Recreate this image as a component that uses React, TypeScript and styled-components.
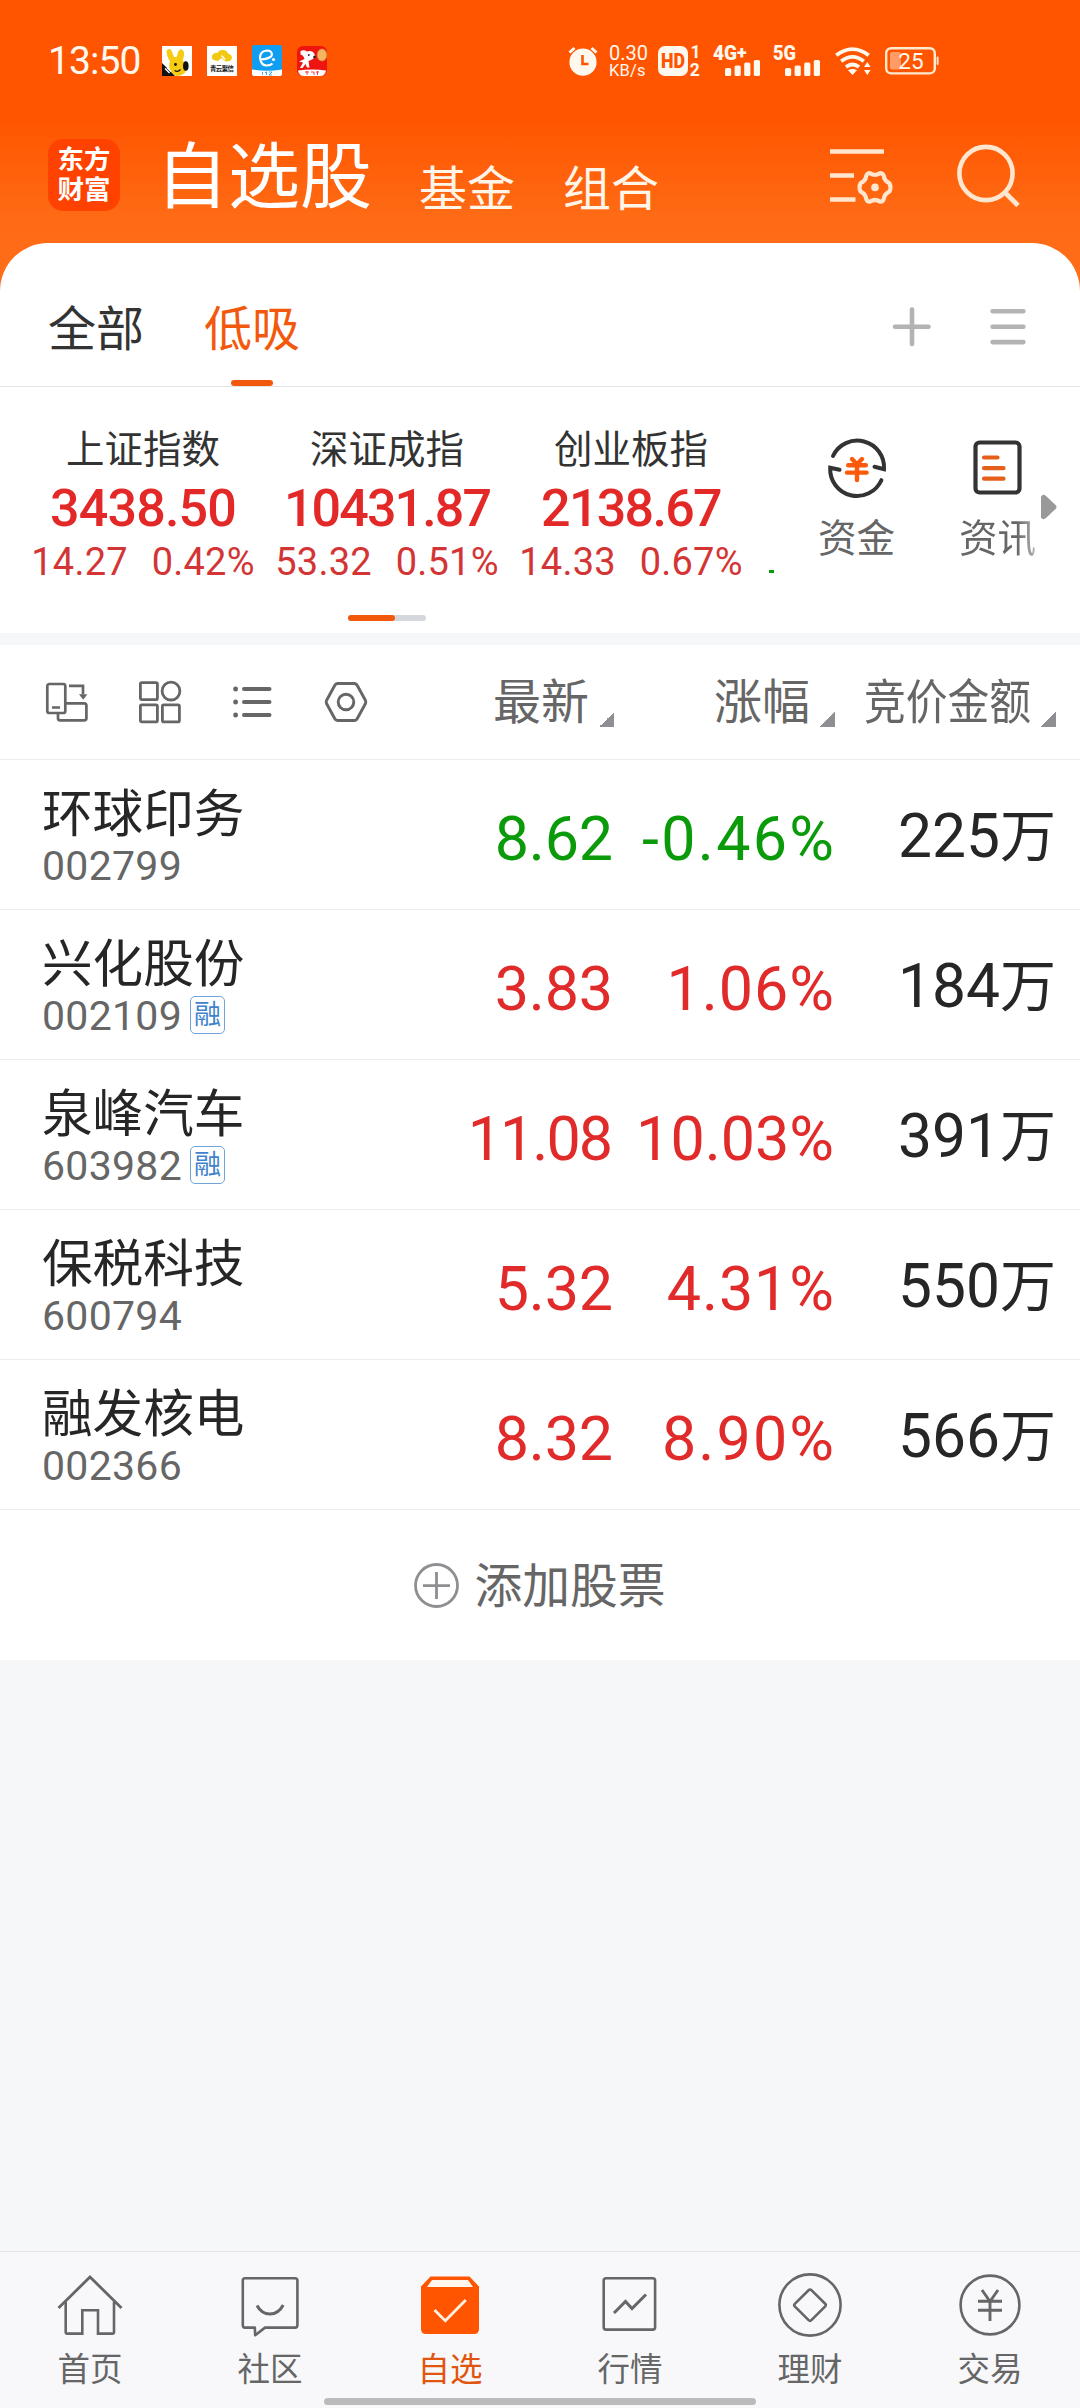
import React from 'react';
import styled, { createGlobalStyle, css } from 'styled-components';

const BRAND = '#ff5500';
const RED = '#e12a2a';
const GREEN = '#0a9a0a';
const GREY = '#666666';

const GlobalStyle = createGlobalStyle`
  *, *::before, *::after { box-sizing: border-box; }
  body {
    margin: 0;
    background: #f6f7f9;
    font-family: Roboto, "Noto Sans CJK SC", sans-serif;
  }
  svg { display: block; flex: none; overflow: visible; }
  button {
    font: inherit; color: inherit; background: none; border: 0; padding: 0; margin: 0;
  }
`;

const Screen = styled.div`
  width: 1080px;
  height: 2408px;
  display: flex;
  flex-direction: column;
  overflow: hidden;
  background: #f6f7f9;
`;

/* ---------- header ---------- */

const Header = styled.header`
  height: 300px;
  flex: none;
  color: #fff8ee;
  background: linear-gradient(180deg, ${BRAND} 0, ${BRAND} 118px, #ff6a14 215px, #ff6e1a 300px);
`;

const StatusBar = styled.div`
  height: 122px;
  padding: 0 141px 0 48px;
  display: flex;
  justify-content: space-between;
`;

const StatusGroup = styled.div<{ $gap: number }>`
  height: 122px;
  display: flex;
  align-items: center;
  gap: ${(p) => p.$gap}px;
`;

const Clock = styled.span`
  width: 99px;
  font-size: 39px;
  line-height: 124px;
  letter-spacing: -0.9px;
  white-space: nowrap;
`;

const Speed = styled.div`
  width: 38px;
  margin: 0 -2px 0 -2px;
  display: flex;
  flex-direction: column;
  font-size: 20px;
  line-height: 18px;
  white-space: nowrap;
  span + span { font-size: 16.5px; line-height: 17px; letter-spacing: 0.2px; }
`;

const WifiSlot = styled.div`
  margin: 0 1px 0 2px;
`;

const TitleBar = styled.div`
  height: 108px;
  display: flex;
  align-items: center;
  padding: 0 60px 0 48px;
`;

const Logo = styled.div`
  width: 72px;
  height: 72px;
  border-radius: 15px;
  background: #ff4200;
  color: #fff;
  display: flex;
  flex-direction: column;
  align-items: center;
  justify-content: center;
  font-weight: 700;
  font-size: 26.5px;
  line-height: 30px;
  margin-top: -2px;
`;

const Title = styled.h1`
  margin: 4px 0 0 36px;
  font-size: 72px;
  font-weight: 400;
  line-height: 80px;
  color: #fff;
`;

const HeaderLink = styled.a<{ $left: number }>`
  margin: 27px 0 0 ${(p) => p.$left}px;
  font-size: 48px;
  line-height: 56px;
  color: #fff5e8;
`;

const HeaderActions = styled.div`
  margin: -2px 0 0 auto;
  display: flex;
  align-items: center;
  gap: 64px;
`;

/* ---------- sheet ---------- */

const Sheet = styled.main`
  margin-top: -57px;
  flex: none;
  background: #fff;
  border-radius: 48px 48px 0 0;
`;

const TabRow = styled.div`
  height: 144px;
  display: flex;
  padding: 0 54px 0 48px;
  border-bottom: 1px solid #e4e4e4;
`;

const Tab = styled.button<{ $active?: boolean }>`
  height: 143px;
  margin-right: 60px;
  padding-top: 55px;
  display: flex;
  flex-direction: column;
  align-items: center;
  justify-content: space-between;
  font-size: 48px;
  line-height: 64px;
  color: ${(p) => (p.$active ? '#f2590d' : '#333')};
  &::after {
    content: "";
    width: 42px;
    height: 6px;
    border-radius: 3px;
    background: ${(p) => (p.$active ? '#f2590d' : 'transparent')};
  }
`;

const TabTools = styled.div`
  margin: 64px 0 0 auto;
  display: flex;
  gap: 58px;
  height: 40px;
`;

const IndexStrip = styled.section`
  height: 246px;
  display: flex;
`;

const IndexScroller = styled.div`
  width: 774px;
  flex: none;
  padding-left: 21px;
  overflow: hidden;
  display: flex;
  flex-direction: column;
`;

const IndexList = styled.div`
  display: flex;
  width: 996px;
`;

const IndexCard = styled.div`
  width: 244px;
  flex: none;
  padding-top: 40px;
  display: flex;
  flex-direction: column;
  align-items: center;
  white-space: nowrap;
`;

const IndexName = styled.span`
  font-size: 38.5px;
  line-height: 46px;
  color: #333;
`;

const IndexPrice = styled.span<{ $ls: number }>`
  margin-top: 7px;
  font-size: 52px;
  font-weight: 500;
  line-height: 58px;
  letter-spacing: ${(p) => p.$ls}px;
  color: #e32828;
`;

const IndexChange = styled.span`
  display: flex;
  gap: 24px;
  font-size: 38px;
  line-height: 48px;
  letter-spacing: 0.2px;
  color: #d33535;
`;

const NextCard = styled(IndexCard)`
  align-items: flex-start;
  padding: 183px 0 0 16px;
`;

const MinusEdge = styled.span`
  width: 12px;
  height: 3px;
  background: ${GREEN};
`;

const Pager = styled.div`
  width: 78px;
  height: 6px;
  margin: 29px 0 0 327px;
  border-radius: 3px;
  background: #d4d8dc;
  &::before {
    content: "";
    display: block;
    width: 47px;
    height: 6px;
    border-radius: 3px;
    background: #f2590d;
  }
`;

const Shortcuts = styled.div`
  flex: 1;
  display: flex;
  padding: 52px 0 0 44px;
`;

const Shortcut = styled.button<{ $left?: number; $fade?: boolean }>`
  width: 77px;
  height: 127px;
  flex: none;
  margin-left: ${(p) => p.$left ?? 0}px;
  display: flex;
  flex-direction: column;
  align-items: center;
  justify-content: space-between;
  font-size: 38.5px;
  line-height: 54px;
  color: ${GREY};
  white-space: nowrap;
  ${(p) =>
    p.$fade &&
    css`
      span {
        color: transparent;
        background: linear-gradient(90deg, #666 75%, #b5b5b5 100%);
        background-clip: text;
        -webkit-background-clip: text;
      }
    `}
`;

const Divider = styled.div`
  height: 12px;
  background: #f6f7f9;
`;

/* ---------- table ---------- */

const TableHead = styled.div`
  height: 115px;
  display: grid;
  grid-template-columns: 392px 222px 221px 221px;
  border-bottom: 1px solid #ececec;
`;

const ViewTools = styled.div`
  display: flex;
  align-items: center;
  padding: 0 0 1px 46px;
  gap: 51px;
`;

const HeadCell = styled.div`
  display: flex;
  justify-content: flex-end;
  align-items: center;
  gap: 10px;
  padding-top: 2px;
  font-size: 48px;
  line-height: 60px;
  color: ${GREY};
  white-space: nowrap;
`;

const Condensed = styled.span`
  width: 168px;
  display: flex;
  justify-content: flex-end;
  > span {
    flex: none;
    transform: scaleX(0.87);
    transform-origin: right center;
  }
`;

const SortMark = styled.i`
  width: 15px;
  height: 15px;
  margin-top: 33px;
  background: linear-gradient(135deg, transparent 50%, #8e8e93 50%);
`;

const Row = styled.div`
  height: 150px;
  display: grid;
  grid-template-columns: 392px 222px 221px 221px;
  border-bottom: 1px solid #ececec;
`;

const NameCell = styled.div`
  padding: 24px 0 0 42px;
`;

const StockName = styled.div`
  font-size: 50.6px;
  line-height: 62px;
  color: #262626;
`;

const CodeLine = styled.div`
  display: flex;
  align-items: center;
  height: 44px;
  margin-top: -2px;
  font-size: 41px;
  line-height: 44px;
  letter-spacing: 0.3px;
  color: ${GREY};
`;

const MarginTag = styled.span`
  width: 35px;
  height: 38px;
  margin: 0 0 2px 8px;
  border: 1.5px solid #6fa3dc;
  border-radius: 5px;
  font-size: 27px;
  line-height: 36px;
  letter-spacing: 0;
  color: #3f83cc;
  display: flex;
  justify-content: center;
`;

const Num = styled.div<{ $color: string; $ls?: number }>`
  padding: 44px 1px 0 0;
  text-align: right;
  font-size: 61px;
  line-height: 70px;
  white-space: nowrap;
  color: ${(p) => p.$color};
  letter-spacing: ${(p) => p.$ls ?? 0}px;
  margin-right: ${(p) => -(p.$ls ?? 0)}px;
`;

const Amount = styled.div`
  display: flex;
  justify-content: flex-end;
  padding-top: 42px;
  font-size: 60.5px;
  line-height: 70px;
  color: #262626;
  white-space: nowrap;
`;

const Unit = styled.span`
  font-size: 56px;
`;

const AddRow = styled.button`
  width: 100%;
  height: 150px;
  display: flex;
  align-items: center;
  justify-content: center;
  gap: 15px;
  font-size: 47.8px;
  line-height: 60px;
  color: ${GREY};
  span { padding-top: 4px; }
`;

const Blank = styled.div`
  flex: 1;
`;

/* ---------- bottom navigation ---------- */

const BottomNav = styled.nav`
  height: 157px;
  flex: none;
  display: flex;
  flex-direction: column;
  align-items: center;
  background: #f8f8fb;
  border-top: 1px solid #e3e4e6;
`;

const NavItems = styled.div`
  width: 1080px;
  height: 146px;
  display: grid;
  grid-template-columns: repeat(6, 180px);
`;

const NavItem = styled.button<{ $active?: boolean }>`
  display: flex;
  flex-direction: column;
  align-items: center;
  padding-top: 20px;
  font-size: 32.5px;
  line-height: 44px;
  gap: 10px;
  color: ${(p) => (p.$active ? '#e0560f' : GREY)};
`;

const HomeIndicator = styled.div`
  width: 432px;
  height: 7px;
  flex: none;
  border-radius: 4px;
  background: #bbbbbb;
`;

/* ---------- icons ---------- */

const RabbitAppIcon = () => (
  <svg width="30" height="30" viewBox="0 0 30 30">
    <rect width="30" height="30" fill="#fff" />
    <path d="M4.5 5Q7 1.5 9.5 4.5L12 11H14.5L16.5 5Q19 1.5 21.5 5Q23 9 20.5 14.5Q25.5 18 24.5 24Q22 30 14 30L10 27Q5.5 21 8 15.5Q4.5 10 4.5 5Z" fill="#f5cc12" />
    <ellipse cx="23.8" cy="20" rx="2.8" ry="4.8" fill="#111" />
    <path d="M0 17L13 30H0Z" fill="#111" />
    <path d="M3 22.5L7.5 27M5 21.5L9 25.5" stroke="#fff" strokeWidth="1.4" />
    <circle cx="13.5" cy="18.5" r="1.4" fill="#111" />
    <path d="M12.5 24.5Q16 26.5 18.5 23.5" stroke="#111" strokeWidth="1.3" fill="none" />
  </svg>
);

const CloudAppIcon = () => (
  <svg width="30" height="30" viewBox="0 0 30 30">
    <rect width="30" height="30" fill="#fff" />
    <path d="M8 14.5Q4 13.5 5 9.5Q7 6 10.5 7Q12 3.5 16 4Q20 4 21 7.5Q25 8.5 25 12Q24 16 18.5 15.5L14.5 12L11 15Z" fill="#f2c912" />
    <path d="M14.5 9.5L18 13.5" stroke="#fff" strokeWidth="1.3" />
    <text x="15" y="25" textAnchor="middle" fontSize="6.4" fontWeight="700" fill="#111" textLength="24">青云聚信</text>
  </svg>
);

const TravelAppIcon = () => (
  <svg width="30" height="30" viewBox="0 0 30 30">
    <rect y="-1" width="30" height="31" rx="2" fill="#119df0" />
    <path d="M0 23.5Q15 26 30 23.5V28Q30 30 28 30H2Q0 30 0 28Z" fill="#fff" />
    <path d="M9 13.5Q19.5 12.5 20 8.5Q19.5 4.5 15 4.5Q8 5 8 12Q9 19.5 15 19.5Q18.5 19.5 20.5 17.5" stroke="#fff" strokeWidth="2.1" fill="none" />
    <circle cx="21.5" cy="13.5" r="1.6" fill="#fff" />
    <path d="M10.5 26V29M13 26.5H15M14.5 25.5V29M17 26H20L17 29H20" stroke="#3aa5e6" strokeWidth="0.9" fill="none" />
  </svg>
);

const DogAppIcon = () => (
  <svg width="30" height="30" viewBox="0 0 30 30">
    <rect width="30" height="30" rx="6" fill="#ee1511" />
    <path d="M1 24.5Q15 22.5 29 24.5Q28 30 23 30H7Q2 30 1 24.5Z" fill="#fff" />
    <path d="M3.5 5Q7 3.5 10 5.5Q15.5 4 17.5 8Q18.5 12.5 14 14L11.5 15L12.5 21.5H10L8.5 18L5.5 22H3L6 16.5L2 15.5L7.5 13Q6.5 9 3.5 8.5Z" fill="#fff" />
    <circle cx="11.8" cy="9" r="0.9" fill="#222" />
    <circle cx="17.4" cy="11" r="1.2" fill="#222" />
    <ellipse cx="25" cy="9" rx="4.8" ry="6" fill="#f6b561" stroke="#d98a35" strokeWidth="0.8" />
    <path d="M8 26H12M10 25V29M14 26H17V29M19 26H22M20.5 25V29" stroke="#e33" strokeWidth="0.9" fill="none" />
  </svg>
);

const AlarmIcon = () => (
  <svg width="30" height="30" viewBox="0 0 30 30">
    <circle cx="15" cy="16.2" r="13.6" fill="#fff8ee" />
    <path d="M1.5 6.5L6.5 2M28.5 6.5L23.5 2" stroke="#fff8ee" strokeWidth="3" />
    <path d="M14.5 9V18H20.5" stroke={BRAND} strokeWidth="2.6" fill="none" />
  </svg>
);

const HdIcon = () => (
  <svg width="42" height="30" viewBox="0 0 42 30">
    <rect width="30" height="30" rx="7" fill="#fff8ee" />
    <text x="15" y="22" textAnchor="middle" fontSize="20" fontWeight="900" fill={BRAND} textLength="24" lengthAdjust="spacingAndGlyphs">HD</text>
    <text x="32.5" y="12.2" fontSize="17.5" fontWeight="700" fill="#fff8ee">1</text>
    <text x="31.7" y="30" fontSize="17.5" fontWeight="700" fill="#fff8ee">2</text>
  </svg>
);

const SignalIcon = ({ label, textWidth, plus }: { label: string; textWidth: number; plus?: boolean }) => (
  <svg width="47" height="30" viewBox="0 0 47 30">
    <text x="0" y="14.4" fontSize="20" fontWeight="900" fill="#fff8ee" textLength={textWidth} lengthAdjust="spacingAndGlyphs">{label}</text>
    {plus && <text x="24" y="12.5" fontSize="18" fontWeight="900" fill="#fff8ee">+</text>}
    {[8, 10.5, 13.5, 16].map((h, i) => (
      <rect key={h} x={12 + i * 9.6} y={30 - h} width="6.2" height={h} rx="1.6" fill="#fff8ee" />
    ))}
  </svg>
);

const WifiIcon = () => (
  <svg width="36" height="28" viewBox="0 0 36 28">
    <g fill="none" stroke="#fff8ee" strokeWidth="3.8">
      <path d="M1.3 8.2Q17.5 -4 33.7 8.2" />
      <path d="M6.2 14.2Q17.5 5.6 28.8 14.2" />
      <path d="M11 20Q17.5 15 24 20" />
    </g>
    <path d="M13 23.2Q17.5 20.6 22 23.2L17.5 28Z" fill="#fff8ee" />
    <path d="M29 20L32.3 15L35.6 20ZM29 23H35.6L32.3 28Z" fill="#fff8ee" />
  </svg>
);

const BatteryIcon = () => (
  <svg width="54" height="28" viewBox="0 0 54 28">
    <rect x="1.2" y="1.2" width="48.6" height="25.2" rx="5" fill="none" stroke="#ffe9cf" strokeWidth="2.4" />
    <rect x="5" y="5" width="11" height="17.5" rx="2" fill="#ff9c66" />
    <rect x="51.6" y="9.5" width="2" height="8.5" rx="1" fill="#ffe9cf" />
    <text x="26" y="22" textAnchor="middle" fontSize="22.5" fill="#fff8ee">25</text>
  </svg>
);

const FilterIcon = () => (
  <svg width="63" height="56" viewBox="0 0 63 56" fill="none" stroke="#ffe6cf" strokeWidth="4.6">
    <path d="M0 4.5H54M0 28.5H24M0 52.5H25.5" />
    <path
      d="M40.2 26.2Q45 29.6 49.8 26.2Q53.6 25.6 54.3 31.2Q55.2 34.2 59.4 36.2Q61.6 40.5 59.4 44.6Q55.2 46.4 54.3 49.8Q53.6 55.2 49.8 54.6Q45 51.4 40.2 54.6Q36.4 55.2 35.7 49.8Q34.8 46.4 30.6 44.6Q28.4 40.5 30.6 36.2Q34.8 34.2 35.7 31.2Q36.4 25.6 40.2 26.2Z"
      strokeWidth="4.2"
      strokeLinejoin="round"
    />
    <circle cx="45" cy="40.4" r="3.8" fill="#ffe6cf" stroke="none" />
  </svg>
);

const SearchIcon = () => (
  <svg width="63" height="63" viewBox="0 0 63 63" fill="none" stroke="#ffe6cf" strokeWidth="4.6">
    <circle cx="29" cy="29.5" r="26.6" />
    <path d="M48 48.5L61 61.5" strokeWidth="4.8" />
  </svg>
);

const PlusIcon = () => (
  <svg width="40" height="40" viewBox="0 0 40 40" stroke="#b3b3b3" strokeWidth="4.6" strokeLinecap="round">
    <path d="M3 19.8H36.5M20 2.5V37" />
  </svg>
);

const MenuIcon = () => (
  <svg width="36" height="40" viewBox="0 0 36 40" stroke="#b3b3b3" strokeWidth="4.6" strokeLinecap="round">
    <path d="M2.6 4.2H33.4M2.6 19.7H33.4M2.6 35.1H33.4" />
  </svg>
);

const FundIcon = () => (
  <svg width="58" height="58" viewBox="0 0 58 58" fill="none" strokeLinecap="round">
    <g stroke="#333" strokeWidth="4">
      <path d="M5 17A26.8 26.8 0 0 1 56 30.2L46.5 27.8" />
      <path d="M53.4 41.2A26.8 26.8 0 0 1 2.2 28.8L11.5 30.8" />
    </g>
    <path d="M24 20L29 25.2L34 20M29 25V41M20.2 26.2H37.8M19 33.6H38.6" stroke="#fa5a0a" strokeWidth="4.4" />
  </svg>
);

const NewsIcon = () => (
  <svg width="58" height="58" viewBox="0 0 58 58" fill="none" strokeLinecap="round">
    <rect x="6.5" y="3.5" width="44" height="50" rx="4" stroke="#333" strokeWidth="4.2" />
    <path d="M15 18.5H28.5M15 29.2H34.5M15 39.7H34.5" stroke="#e4601a" strokeWidth="4.2" />
  </svg>
);

const ArrowWrap = styled.div`
  margin: 55px 0 0 5px;
`;

const ArrowIcon = () => (
  <svg width="16" height="26" viewBox="0 0 16 26">
    <path d="M0 2.5Q2 -0.5 5 2L15 11.5Q16 13 15 14.5L5 24Q2 26.5 0 23.5Z" fill="#999" />
  </svg>
);

const RotateIcon = () => (
  <svg width="42" height="40" viewBox="0 0 42 40" fill="none" stroke={GREY} strokeWidth="2.7">
    <rect x="1.3" y="2" width="18" height="29" rx="2" />
    <path d="M6 25.5H14M23 3.8H37V12.5" />
    <path d="M33 12.2H41.4L37.2 17.8Z" fill={GREY} stroke="none" />
    <path d="M19.5 21.3H38.2Q40.4 21.3 40.4 23.5V36.3Q40.4 38.4 38.2 38.4H14Q12 38.4 12 36.3V31.5" />
  </svg>
);

const GridIcon = () => (
  <svg width="42" height="42" viewBox="0 0 42 42" fill="none" stroke={GREY} strokeWidth="2.8">
    <rect x="1.4" y="1.6" width="17" height="17" rx="1.4" />
    <circle cx="32" cy="10.1" r="8.9" />
    <rect x="1.4" y="23.8" width="17" height="17" rx="1.4" />
    <rect x="23.4" y="23.8" width="17" height="17" rx="1.4" />
  </svg>
);

const ListIcon = () => (
  <svg width="42" height="34" viewBox="0 0 42 34" stroke={GREY} strokeWidth="4" strokeLinecap="round">
    <path d="M12 4H37.5M12 17H37.5M12 30H37.5" />
    <path d="M3.6 3.8V4.2M3.6 16.8V17.2M3.6 29.8V30.2" strokeWidth="4.8" />
  </svg>
);

const HexIcon = () => (
  <svg width="42" height="40" viewBox="0 0 42 40" fill="none" stroke={GREY} strokeWidth="2.9" strokeLinejoin="round">
    <path d="M12.5 1.5H29.5Q31.3 1.7 32.3 3.5L40.5 18.5Q41.2 20 40.5 21.5L32.3 36.5Q31.3 38.4 29.5 38.5H12.5Q10.7 38.4 9.7 36.5L1.5 21.5Q0.8 20 1.5 18.5L9.7 3.5Q10.7 1.7 12.5 1.5Z" />
    <circle cx="21" cy="20" r="7.8" />
  </svg>
);

const AddIcon = () => (
  <svg width="45" height="45" viewBox="0 0 45 45" fill="none" stroke="#8e8e93" strokeWidth="2.8">
    <circle cx="22.5" cy="22.5" r="21" />
    <path d="M9 22.6H36M22.5 9V36" />
  </svg>
);

const navSvg = {
  width: 66,
  height: 66,
  viewBox: '0 0 66 66',
  fill: 'none',
  stroke: GREY,
  strokeWidth: 2.6,
} as const;

const HomeIcon = () => (
  <svg {...navSvg}>
    <path d="M1.5 36L33 5L64.5 36" strokeWidth="2.8" />
    <path d="M8.7 30V60Q8.7 61.6 10.2 61.6H25.3V38.2H41V61.6H55.6Q57 61.6 57 60V30" />
  </svg>
);

const ChatIcon = () => (
  <svg {...navSvg}>
    <path d="M8 6.2H58Q60.4 6.2 60.4 8.6V53.2Q60.4 55.6 58 55.6H28L18.2 63.2L17.8 55.6H8Q5.8 55.6 5.8 53.2V8.6Q5.8 6.2 8 6.2Z" strokeLinejoin="round" />
    <path d="M20 33.5Q24.5 42 33 42Q41.5 42 46.2 33" strokeWidth="3" />
  </svg>
);

const PickIcon = () => (
  <svg {...navSvg} stroke="none">
    <path d="M13.5 4.5H52.5L62 14.5V57Q62 62 57 62H9Q4 62 4 57V14.5Z" fill={BRAND} />
    <path d="M15 8H51L56 15H10Z" fill="#fff6ee" />
    <path d="M17.5 38L28.3 48.8L48.8 28" stroke="#fff0e0" strokeWidth="2.8" fill="none" />
  </svg>
);

const QuoteIcon = () => (
  <svg {...navSvg}>
    <rect x="6.7" y="6.2" width="51.4" height="51.4" rx="2.4" />
    <path d="M17 41L28.5 29.5L35 36.5L49 22.5" strokeWidth="3" />
  </svg>
);

const WealthIcon = () => (
  <svg {...navSvg}>
    <circle cx="33" cy="33" r="30.6" />
    <path d="M31.6 18.2Q33 16.8 34.4 18.2L48.2 31.8Q49.4 33 48.2 34.4L34.4 48.2Q33 49.6 31.6 48.2L17.8 34.4Q16.6 33 17.8 31.8Z" />
  </svg>
);

const TradeIcon = () => (
  <svg {...navSvg}>
    <circle cx="33" cy="33" r="29.4" />
    <path d="M25 18L33 29.5L41 18M33 29V49M21 29.2H45M21 38.2H45" strokeWidth="2.9" />
  </svg>
);

/* ---------- data ---------- */

const indices = [
  { name: '上证指数', price: '3438.50', ls: -0.8, change: '14.27', pct: '0.42%' },
  { name: '深证成指', price: '10431.87', ls: -1.9, change: '53.32', pct: '0.51%' },
  { name: '创业板指', price: '2138.67', ls: -1.7, change: '14.33', pct: '0.67%' },
];

const stocks = [
  { name: '环球印务', code: '002799', price: '8.62', priceLs: -0.2, pct: '-0.46%', ls: 2.3, amount: '225', color: GREEN },
  { name: '兴化股份', code: '002109', tag: true, price: '3.83', priceLs: -0.2, pct: '1.06%', ls: 1, amount: '184', color: RED },
  { name: '泉峰汽车', code: '603982', tag: true, price: '11.08', priceLs: -2, pct: '10.03%', ls: 0, amount: '391', color: RED },
  { name: '保税科技', code: '600794', price: '5.32', priceLs: -0.2, pct: '4.31%', ls: 0.9, amount: '550', color: RED },
  { name: '融发核电', code: '002366', price: '8.32', priceLs: -0.2, pct: '8.90%', ls: 2.1, amount: '566', color: RED },
];

const navItems = [
  { label: '首页', Icon: HomeIcon },
  { label: '社区', Icon: ChatIcon },
  { label: '自选', Icon: PickIcon, active: true },
  { label: '行情', Icon: QuoteIcon },
  { label: '理财', Icon: WealthIcon },
  { label: '交易', Icon: TradeIcon },
];

export default function App() {
  return (
    <Screen>
      <GlobalStyle />
      <Header>
        <StatusBar>
          <StatusGroup $gap={15}>
            <Clock>13:50</Clock>
            <RabbitAppIcon />
            <CloudAppIcon />
            <TravelAppIcon />
            <DogAppIcon />
          </StatusGroup>
          <StatusGroup $gap={13}>
            <AlarmIcon />
            <Speed>
              <span>0.30</span>
              <span>KB/s</span>
            </Speed>
            <HdIcon />
            <SignalIcon label="4G" textWidth={24} plus />
            <SignalIcon label="5G" textWidth={23} />
            <WifiSlot>
              <WifiIcon />
            </WifiSlot>
            <BatteryIcon />
          </StatusGroup>
        </StatusBar>
        <TitleBar>
          <Logo>
            <span>东方</span>
            <span>财富</span>
          </Logo>
          <Title>自选股</Title>
          <HeaderLink $left={47}>基金</HeaderLink>
          <HeaderLink $left={48}>组合</HeaderLink>
          <HeaderActions>
            <FilterIcon />
            <SearchIcon />
          </HeaderActions>
        </TitleBar>
      </Header>

      <Sheet>
        <TabRow>
          <Tab>全部</Tab>
          <Tab $active>低吸</Tab>
          <TabTools>
            <PlusIcon />
            <MenuIcon />
          </TabTools>
        </TabRow>

        <IndexStrip>
          <IndexScroller>
            <IndexList>
              {indices.map((it) => (
                <IndexCard key={it.name}>
                  <IndexName>{it.name}</IndexName>
                  <IndexPrice $ls={it.ls}>{it.price}</IndexPrice>
                  <IndexChange>
                    <span>{it.change}</span>
                    <span>{it.pct}</span>
                  </IndexChange>
                </IndexCard>
              ))}
              <NextCard>
                <MinusEdge />
              </NextCard>
            </IndexList>
            <Pager />
          </IndexScroller>
          <Shortcuts>
            <Shortcut>
              <FundIcon />
              <span>资金</span>
            </Shortcut>
            <Shortcut $left={64} $fade>
              <NewsIcon />
              <span>资讯</span>
            </Shortcut>
            <ArrowWrap>
              <ArrowIcon />
            </ArrowWrap>
          </Shortcuts>
        </IndexStrip>

        <Divider />

        <TableHead>
          <ViewTools>
            <RotateIcon />
            <GridIcon />
            <ListIcon />
            <HexIcon />
          </ViewTools>
          <HeadCell>
            <span>最新</span>
            <SortMark />
          </HeadCell>
          <HeadCell>
            <span>涨幅</span>
            <SortMark />
          </HeadCell>
          <HeadCell>
            <Condensed>
              <span>竞价金额</span>
            </Condensed>
            <SortMark />
          </HeadCell>
        </TableHead>

        {stocks.map((s) => (
          <Row key={s.code}>
            <NameCell>
              <StockName>{s.name}</StockName>
              <CodeLine>
                {s.code}
                {s.tag && <MarginTag>融</MarginTag>}
              </CodeLine>
            </NameCell>
            <Num $color={s.color} $ls={s.priceLs}>{s.price}</Num>
            <Num $color={s.color} $ls={s.ls}>{s.pct}</Num>
            <Amount>
              {s.amount}
              <Unit>万</Unit>
            </Amount>
          </Row>
        ))}

        <AddRow>
          <AddIcon />
          <span>添加股票</span>
        </AddRow>
      </Sheet>

      <Blank />

      <BottomNav>
        <NavItems>
          {navItems.map(({ label, Icon, active }) => (
            <NavItem key={label} $active={active}>
              <Icon />
              <span>{label}</span>
            </NavItem>
          ))}
        </NavItems>
        <HomeIndicator />
      </BottomNav>
    </Screen>
  );
}
